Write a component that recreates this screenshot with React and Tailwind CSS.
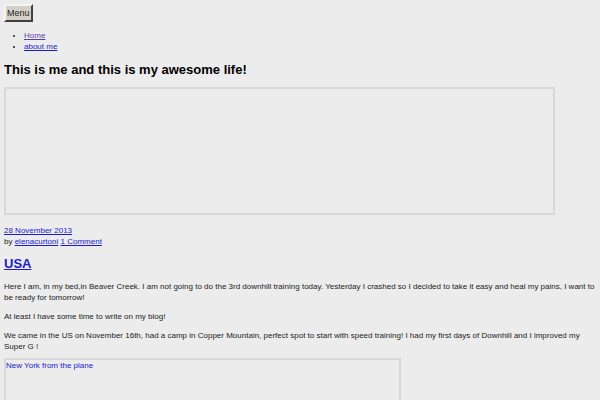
import React from 'react';

const App = () => {
    return (
        <div className="min-h-[400px] bg-[#ececec] px-1 pt-1 text-[8px] leading-[11px] text-[#222] font-['Liberation_Sans',Arial,sans-serif]">
            {/* Menu toggle */}
            <button className="block bg-[#d4d0c8] border-2 border-t-[#f4f4f4] border-l-[#f4f4f4] border-b-[#404040] border-r-[#404040] px-[1px] h-[18px] text-[9px] leading-[12px] text-[#222]">
                Menu
            </button>

            <ul className="list-disc pl-5 mt-[8px]">
                <li><a href="#" className="underline text-[#5a3fa8]">Home</a></li>
                <li><a href="#" className="underline text-[#1a1ad0]">about me</a></li>
            </ul>

            <h1 className="text-[13px] leading-[18px] font-bold text-black mt-[9px]">This is me and this is my awesome life!</h1>

            <div className="mt-[8px] w-[551px] h-[128px] border-2 border-[#d8d8d8]"></div>

            <div className="mt-[10px]">
                <a href="#" className="underline text-[#1a1ad0]">28 November 2013</a>
            </div>
            <div>
                by <a href="#" className="underline text-[#1a1ad0]">elenacurtoni</a> <a href="#" className="underline text-[#1a1ad0]">1 Comment</a>
            </div>

            <h2 className="mt-[8px] text-[13px] leading-[18px] font-bold">
                <a href="#" className="underline text-[#1a1ad0]">USA</a>
            </h2>

            <p className="mt-[8px]">
                Here I am, in my bed,in Beaver Creek. I am not going to do the 3rd downhill training today. Yesterday I crashed so I decided to take it easy and heal my pains, I want to be ready for tomorrow!
            </p>
            <p className="mt-[8px]">At least I have some time to write on my blog!</p>
            <p className="mt-[8px]">
                We came in the US on November 16th, had a camp in Copper Mountain, perfect spot to start with speed training! I had my first days of Downhill and I improved my Super G !
            </p>

            <div className="mt-[6px] w-[397px] h-[80px] border-2 border-[#d8d8d8]">
                <a href="#" className="text-[#1a1ad0]">New York from the plane</a>
            </div>
        </div>
    );
};

export default App;
